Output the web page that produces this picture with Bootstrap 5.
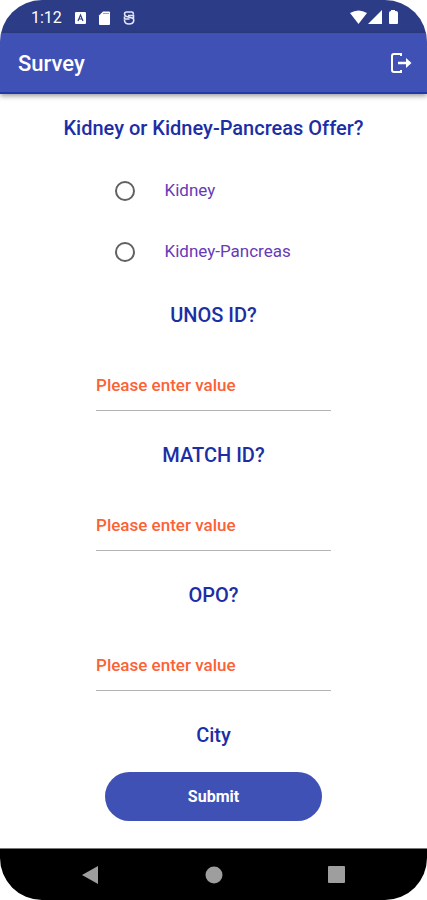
<!DOCTYPE html>
<html lang="en">
<head>
<meta charset="utf-8">
<meta name="viewport" content="width=device-width, initial-scale=1">
<title>Survey</title>
<link href="https://cdn.jsdelivr.net/npm/bootstrap@5.3.0/dist/css/bootstrap.min.css" rel="stylesheet">
<style>
  body { font-family: Roboto, "Liberation Sans", sans-serif; background: #fff; }
  .status-strip { background: #2d3c86; height: 33px; padding: 2px 27px 0 31px; font-size: 16px; }
  .app-header { background: #3f51b5; height: 61px; padding: 0 14px 0 18px; border-bottom: 2px solid #2139a8; box-shadow: 0 2px 5px rgba(0,0,0,.4); }
  .app-title { font-size: 22px; line-height: 28px; font-weight: 500; padding-top: 2px; }
  .screen { border-radius: 42px; }
  .question { color: #1c2ea6; font-size: 20px; line-height: 28px; font-weight: 500; }
  .survey-form { padding-top: 20px; }
  .choices { width: 198px; margin: 18px auto 19px; }
  .choice-row { height: 61px; gap: 30px; }
  .choice-row .form-check-input { width: 20px; height: 20px; border: 2px solid #616161; }
  .choice-row label { color: #673ab7; font-size: 17px; }
  .answer { width: 55%; margin: 31px auto 30px; }
  .answer .form-control { height: 51px; font-size: 17px; font-weight: 500; border-bottom: 1px solid #b4b4b4; }
  .answer .form-control::placeholder { color: #fb6236; opacity: 1; }
  .submit-btn { --bs-btn-bg: #3f51b5; --bs-btn-hover-bg: #35459f; --bs-btn-color: #fff; --bs-btn-hover-color: #fff; width: 51%; height: 49px; margin: 23px auto 27px; font-size: 16px; font-weight: 700; }
  .system-nav { height: 52px; background: #000; border-top: 1px solid #777; padding: 0 81px; }
</style>
<script src="https://cdn.jsdelivr.net/npm/bootstrap@5.3.0/dist/js/bootstrap.bundle.min.js" defer></script>
</head>
<body>
<div class="screen min-vh-100 d-flex flex-column overflow-hidden">
  <div class="status-strip d-flex align-items-center justify-content-between text-white">
    <div class="d-flex align-items-center">
      <span>1:12</span>
      <svg class="ms-2" width="66" height="16" viewBox="0 0 66 16" aria-hidden="true">
        <rect x="5" y="2" width="11" height="12" rx="1" fill="#fff"/>
        <path d="M8 11 10.500 5 13 11M9 9h3" fill="none" stroke="#2d3c86" stroke-width="1.200"/>
        <path d="M33 1.500h6q1 0 1 1v11.500q0 1-1 1h-9q-1 0-1-1V5.500z" fill="#fff"/>
        <path d="M33.500 3.500h5" stroke="#2d3c86" stroke-dasharray="1 1"/>
        <path d="M63.300 4.500V3.500q0-1.500-1.500-1.500h-5Q54.500 2 54.500 4t2 2.500L62 8q1.800.5 1.800 2.200Q63.500 14 59 14t-4.500-4M54.500 6.500V9h5M58 5.500h5.500v3" fill="none" stroke="#e3e6fa" stroke-width="1.600"/>
      </svg>
    </div>
    <svg width="50" height="18" viewBox="0 0 50 18" aria-hidden="true" fill="#fff">
      <path d="M0 4Q8.500-1 17 4L8.500 15z"/>
      <path d="M18 15 32 1v14z"/>
      <path d="M41 2V1h4v1h1q2 0 2 2v10q0 1-1 1h-7q-1 0-1-1V4q0-2 2-2z"/>
    </svg>
  </div>
  <header class="app-header d-flex align-items-center justify-content-between text-white">
    <h1 class="app-title mb-0">Survey</h1>
    <button type="button" class="btn p-0 border-0 text-white lh-1" aria-label="Log out">
      <svg width="24" height="24" viewBox="0 0 24 24" aria-hidden="true">
        <path d="M12 5V3H5Q3 3 3 5v14q0 2 2 2h7v-2" fill="none" stroke="#fff" stroke-width="2"/>
        <path d="M9 12h9" stroke="#fff" stroke-width="2.500"/>
        <path d="M17 7 22.500 12 17 17z" fill="#fff"/>
      </svg>
    </button>
  </header>
  <main class="flex-grow-1">
    <form class="survey-form">
      <h2 class="question text-center m-0" id="offer">Kidney or Kidney-Pancreas Offer?</h2>
      <div class="choices" role="radiogroup" aria-labelledby="offer">
        <div class="choice-row d-flex align-items-center">
          <input class="form-check-input m-0" type="radio" name="offer" id="kidney">
          <label for="kidney">Kidney</label>
        </div>
        <div class="choice-row d-flex align-items-center">
          <input class="form-check-input m-0" type="radio" name="offer" id="pancreas">
          <label for="pancreas">Kidney-Pancreas</label>
        </div>
      </div>
      <label class="question d-block text-center" for="unos">UNOS ID?</label>
      <div class="answer"><input class="form-control border-top-0 border-start-0 border-end-0 rounded-0 p-0" id="unos" type="text" placeholder="Please enter value"></div>
      <label class="question d-block text-center" for="match">MATCH ID?</label>
      <div class="answer"><input class="form-control border-top-0 border-start-0 border-end-0 rounded-0 p-0" id="match" type="text" placeholder="Please enter value"></div>
      <label class="question d-block text-center" for="opo">OPO?</label>
      <div class="answer"><input class="form-control border-top-0 border-start-0 border-end-0 rounded-0 p-0" id="opo" type="text" placeholder="Please enter value"></div>
      <h2 class="question text-center m-0">City</h2>
      <button type="submit" class="submit-btn btn rounded-pill d-block">Submit</button>
    </form>
  </main>
  <nav class="system-nav d-flex align-items-center justify-content-between" aria-label="System">
    <button type="button" class="btn p-0 border-0 lh-1" aria-label="Back"><svg width="18" height="20" viewBox="0 0 18 20"><path d="M1 10 17 1v18z" fill="#9e9e9e"/></svg></button>
    <button type="button" class="btn p-0 border-0 lh-1" aria-label="Home"><svg width="18" height="18" viewBox="0 0 18 18"><circle cx="9" cy="9" r="8.500" fill="#9e9e9e"/></svg></button>
    <button type="button" class="btn p-0 border-0 lh-1" aria-label="Recent apps"><svg width="18" height="18" viewBox="0 0 18 18"><rect x="0" y="0" width="17" height="17" rx="1" fill="#9e9e9e"/></svg></button>
  </nav>
</div>
</body>
</html>
